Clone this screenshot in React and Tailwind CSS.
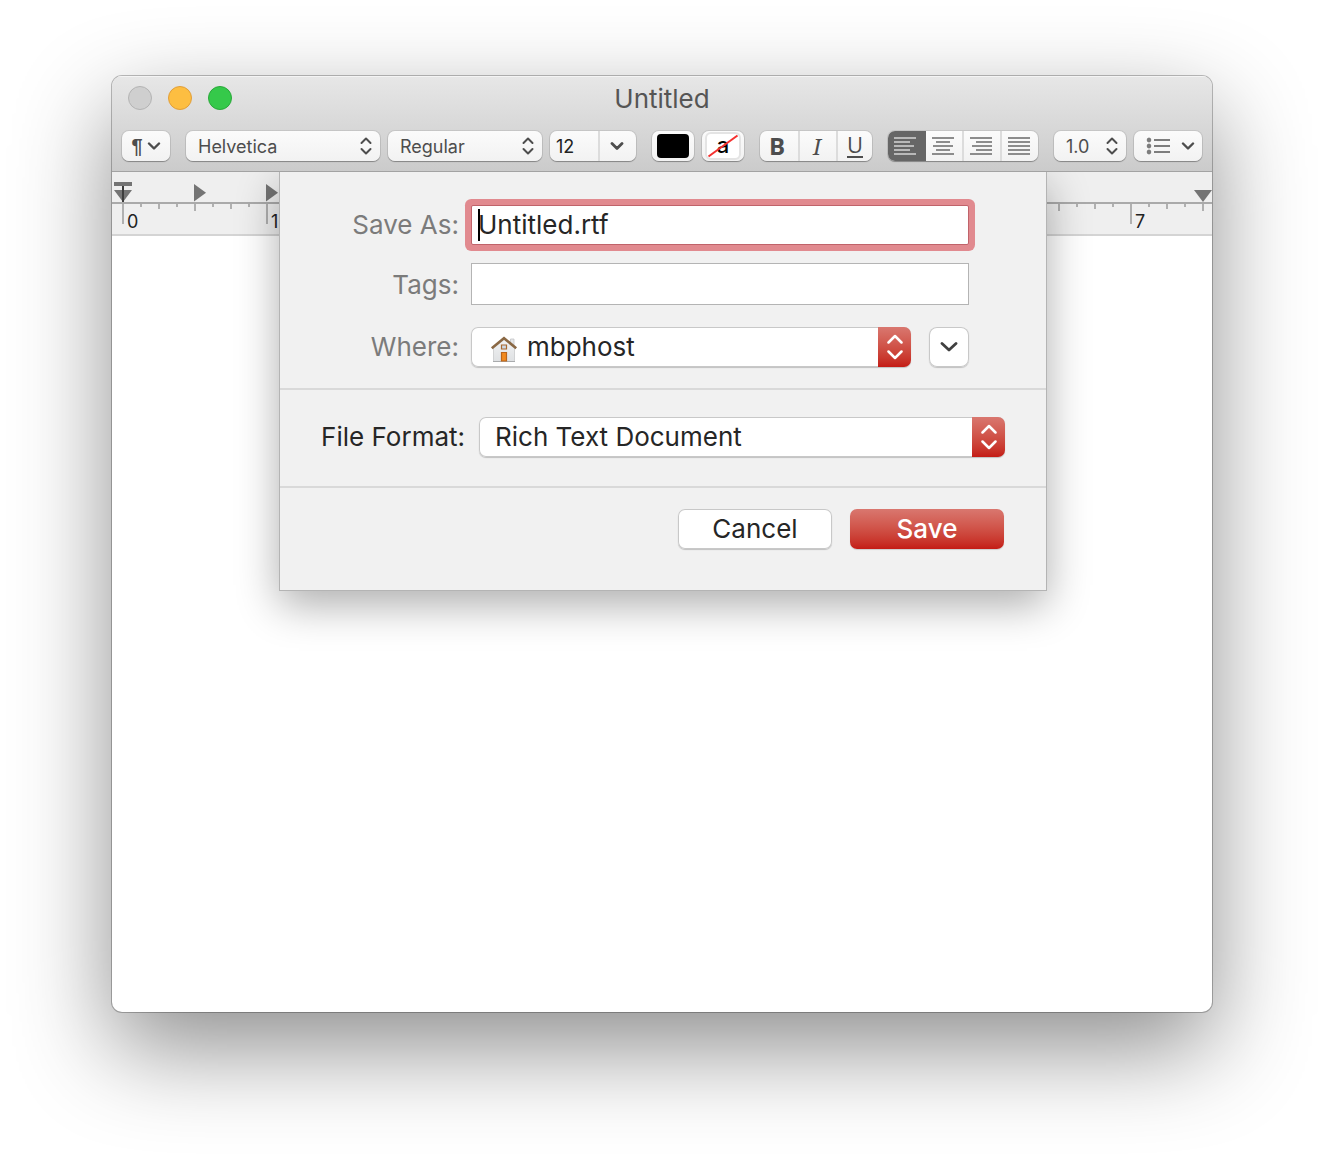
import React from "react";

const control =
  "h-[30px] rounded-[7px] bg-gradient-to-b from-[#fbfbfb] to-[#f2f2f2] shadow-[0_0_0_1px_rgba(0,0,0,0.08),0_1px_1px_rgba(0,0,0,0.3)]";

function ChevronDown({ className = "", stroke = 2.4 }) {
  return (
    <svg viewBox="0 0 14 8" fill="none" stroke="currentColor" strokeWidth={stroke} strokeLinecap="round" strokeLinejoin="round" className={"h-2 w-3.5 shrink-0 " + className}>
      <path d="M2 1.5 7 6.5 12 1.5" />
    </svg>
  );
}

function UpDown({ className = "" }) {
  return (
    <svg viewBox="0 0 12 18" fill="none" stroke="currentColor" strokeWidth="2" strokeLinecap="round" strokeLinejoin="round" className={"h-[18px] w-3 shrink-0 " + className}>
      <path d="M1.5 6 6 1.5 10.5 6M1.5 12 6 16.5 10.5 12" />
    </svg>
  );
}

function ToolbarSelect({ label, value, className }) {
  return (
    <div className={"relative " + className}>
      <select aria-label={label} defaultValue={value} className={control + " w-full appearance-none pt-0.5 pr-6 pl-3 text-lg leading-7 text-[#4d4d4d] outline-none"}>
        <option>{value}</option>
      </select>
      <UpDown className="pointer-events-none absolute top-1.5 right-2 text-[#4d4d4d]" />
    </div>
  );
}

const LINES = {
  left: [[0, 22], [0, 16], [0, 20], [0, 16], [0, 22]],
  center: [[0, 22], [4, 14], [1, 20], [4, 14], [0, 22]],
  right: [[0, 22], [6, 16], [2, 20], [6, 16], [0, 22]],
  justify: [[0, 22], [0, 22], [0, 22], [0, 22], [0, 22]],
};

function AlignIcon({ kind }) {
  return (
    <svg viewBox="0 0 22 18" fill="currentColor" className="h-[18px] w-[22px]">
      {LINES[kind].map(([x, w], i) => (
        <rect key={i} x={x} y={i * 4} width={w} height="2" />
      ))}
    </svg>
  );
}

function ListIcon() {
  return (
    <svg viewBox="0 0 24 18" fill="#7d7d7d" className="h-[18px] w-6">
      <path d="M2.4 0h1.2v18H2.4z" opacity=".35" />
      {[3, 9, 15].map((y) => (
        <g key={y}>
          <circle cx="3" cy={y} r="2.3" />
          <rect x="8" y={y - 1} width="16" height="2" />
        </g>
      ))}
    </svg>
  );
}

function RulerInch({ n, label }) {
  return (
    <div className="w-36 shrink-0">
      <svg viewBox="0 0 144 32" className="block h-8 w-36 overflow-visible">
        <g fill="#b0b0b0">
          <rect x="0" y="0" width="2" height="20" />
          {[18, 54, 90, 126].map((x) => <rect key={x} x={x} y="0" width="2" height="3" />)}
          {[36, 108].map((x) => <rect key={x} x={x} y="0" width="2" height="5" />)}
          <rect x="72" y="0" width="2" height="7" />
        </g>
        {n < 6 && <path d="M72 -20v17.500l12-8.700z" fill="#747474" />}
        {n > 0 && n < 7 && <path d="M0 -20v17.500l12-8.700z" fill="#747474" />}
        <text x="5" y="24" fontSize="18" fill="#222" fontFamily="Inter, sans-serif">{label}</text>
      </svg>
    </div>
  );
}

const INCHES = ["0", "1", "", "", "", "", "", "7"];

function Ruler() {
  return (
    <div className="relative h-16 overflow-hidden border-b-2 border-[#d4d4d4] bg-[#efefef]">
      <div className="mt-[30px] flex border-t-2 border-[#aaaaaa] pl-2.5">
        {INCHES.map((label, n) => <RulerInch key={n} n={n} label={label} />)}
      </div>
      <svg viewBox="0 0 18 20" className="absolute top-2.5 left-0.5 h-5 w-[18px]">
        <path d="M0 0h18v4H0zM0 8h18L9 20z" fill="#747474" />
        <path d="M8 4h2v16H8z" fill="#3c3c3c" />
      </svg>
      <svg viewBox="0 0 18 12" className="absolute top-[18px] right-0 h-3 w-[18px]">
        <path d="M0 0h18L9 12z" fill="#747474" />
      </svg>
    </div>
  );
}

function HomeIcon({ className }) {
  return (
    <svg viewBox="0 0 28 28" className={"h-7 w-7 " + className}>
      <defs>
        <linearGradient id="wall" x1="0" y1="0" x2="0" y2="1">
          <stop offset="0" stopColor="#f2f3f4" />
          <stop offset="1" stopColor="#dfe1e3" />
        </linearGradient>
      </defs>
      <path d="M20.500 4h3.500v7h-3.500z" fill="#e6e7e8" stroke="#c3c4c6" strokeWidth=".8" />
      <path d="M3.500 12 14 3.500 24.500 12v14.500h-21z" fill="url(#wall)" stroke="#c9cacb" strokeWidth=".8" />
      <path d="M3 26.500h22" stroke="#a9abad" strokeWidth="1" />
      <path d="M1.800 13.300 14 3.200l12.200 10.100" fill="none" stroke="#8a6844" strokeWidth="2.600" />
      <path d="M11.500 10h5v4h-5z" fill="#cdd9e6" stroke="#a9692f" strokeWidth="1.200" />
      <path d="M11.500 17.500h5v8.500h-5z" fill="#f28a1e" stroke="#b9651b" strokeWidth="1.200" />
    </svg>
  );
}

function PopUp({ id, value, className, padding, children }) {
  return (
    <div className={"relative h-10 " + className}>
      <select id={id} defaultValue={value} className={"h-10 w-full appearance-none rounded-[7px] bg-white pr-10 text-[26px] leading-10 text-[#262626] shadow-[inset_0_0_0_1px_#c8c8c8,0_1px_1px_rgba(0,0,0,0.2)] outline-none " + padding}>
        <option>{value}</option>
      </select>
      {children}
      <span className="pointer-events-none absolute inset-y-0 right-0 flex w-[33px] items-center justify-center rounded-r-[7px] bg-gradient-to-b from-[#d9776f] to-[#c41b15] text-white">
        <svg viewBox="0 0 16 26" fill="none" stroke="currentColor" strokeWidth="2.500" strokeLinecap="round" strokeLinejoin="round" className="h-[26px] w-4">
          <path d="M1.500 8.500 8 2l6.500 6.500M1.500 17.500 8 24l6.500-6.500" />
        </svg>
      </span>
    </div>
  );
}

function SaveSheet() {
  const label = "w-[179px] shrink-0 text-right text-[#7b7b7b]";
  return (
    <form className="w-[768px] border border-t-0 border-[#b4b4b4] bg-[#f1f1f1] text-[26px] leading-10 text-[#262626] shadow-[0_14px_40px_rgba(0,0,0,0.32)]" onSubmit={(e) => e.preventDefault()}>
      <div className="flex flex-col border-b-2 border-[#d9d9d9] pt-[33px] pb-[21px]">
        <div className="flex gap-3">
          <label htmlFor="name" className={label}>Save As:</label>
          <div className="relative">
            <input id="name" defaultValue="Untitled.rtf" className="h-10 w-[498px] rounded-xs border border-[#c0636a] bg-white px-1.5 text-[#262626] shadow-[0_0_0_6px_#e18a8f] outline-none" />
            <span className="absolute top-1 left-[7px] h-8 w-0.5 bg-black" />
          </div>
        </div>
        <div className="mt-[18px] flex items-end gap-3">
          <label htmlFor="tags" className={label}>Tags:</label>
          <input id="tags" className="h-[42px] w-[498px] border border-[#b4b4b4] bg-white px-1.5 outline-none" />
        </div>
        <div className="mt-[22px] flex gap-3">
          <label htmlFor="where" className={label}>Where:</label>
          <PopUp id="where" value="mbphost" className="w-[440px]" padding="pl-14">
            <HomeIcon className="pointer-events-none absolute top-2 left-[19px]" />
          </PopUp>
          <button type="button" aria-label="Show more" className="ml-1.5 flex h-10 w-10 items-center justify-center rounded-lg bg-white text-[#404040] shadow-[inset_0_0_0_1px_#c8c8c8,0_1px_1px_rgba(0,0,0,0.2)]">
            <svg viewBox="0 0 18 10" fill="none" stroke="currentColor" strokeWidth="2.800" strokeLinecap="round" strokeLinejoin="round" className="h-2.5 w-[18px]">
              <path d="M2 1.500 9 8l7-6.500" />
            </svg>
          </button>
        </div>
      </div>
      <div className="flex gap-3.5 border-b-2 border-[#d9d9d9] pt-[27px] pb-[29px]">
        <label htmlFor="format" className="w-[185px] shrink-0 text-right">File Format:</label>
        <PopUp id="format" value="Rich Text Document" className="w-[526px]" padding="pl-4" />
      </div>
      <div className="flex justify-end gap-[18px] pt-[21px] pr-[42px] pb-[41px]">
        <button type="button" className="h-10 w-[154px] rounded-[7px] bg-white shadow-[inset_0_0_0_1px_#c8c8c8,0_1px_1px_rgba(0,0,0,0.2)]">Cancel</button>
        <button type="submit" className="h-10 w-[154px] rounded-[7px] bg-gradient-to-b from-[#d9776f] to-[#c41b15] font-medium text-white shadow-[0_1px_1px_rgba(0,0,0,0.15)]">Save</button>
      </div>
    </form>
  );
}

export default function App() {
  return (
    <main className="bg-white px-28 pt-[76px] pb-[148px] font-['Inter',sans-serif]">
      <section className="overflow-hidden rounded-[10px] bg-white shadow-[0_0_0_1px_rgba(0,0,0,0.25),0_36px_96px_rgba(0,0,0,0.45)]">
        <header className="border-b border-[#a3a3a3] bg-gradient-to-b from-[#e7e7e7] to-[#cbcbcb] shadow-[inset_0_1px_0_#f4f4f4]">
          <div className="grid h-[55px] grid-cols-[1fr_auto_1fr] items-start px-4 pt-2.5">
            <div className="flex gap-4">
              <button aria-label="Close" className="h-6 w-6 rounded-full border border-[#b3b3b3] bg-[#cfcfcf]" />
              <button aria-label="Minimize" className="h-6 w-6 rounded-full border border-[#e09e3a] bg-[#fdbe41]" />
              <button aria-label="Zoom" className="h-6 w-6 rounded-full border border-[#2aa83a] bg-[#35c94a]" />
            </div>
            <h1 className="text-[26px] leading-[26px] text-[#555555]">Untitled</h1>
          </div>
          <div className="flex gap-4 px-2.5 pb-2.5">
            <button aria-label="Paragraph styles" className={control + " flex w-12 items-center justify-center gap-1 text-[#4d4d4d]"}>
              <span className="font-['Liberation_Sans',sans-serif] text-xl leading-8 font-bold">¶</span>
              <ChevronDown />
            </button>
            <div className="flex min-w-0 flex-1 gap-2">
              <ToolbarSelect label="Font family" value="Helvetica" className="min-w-0 flex-1" />
              <ToolbarSelect label="Typeface" value="Regular" className="w-[154px]" />
              <div className={control + " flex w-[86px]"}>
                <input aria-label="Font size" defaultValue="12" className="w-12 pt-0.5 pl-1.5 text-lg leading-7 text-[#222222] outline-none" />
                <button aria-label="Font sizes" className="flex flex-1 items-center justify-center border-l-2 border-[#dcdcdc] pr-0.5 text-[#4d4d4d]">
                  <ChevronDown stroke={2.8} />
                </button>
              </div>
            </div>
            <div className="flex gap-2">
              <button aria-label="Text color" className={control + " w-[42px] px-[5px]"}>
                <span className="block h-6 rounded-sm bg-black" />
              </button>
              <button aria-label="Text background color" className={control + " relative w-[42px] px-[5px]"}>
                <svg viewBox="0 0 32 24" className="absolute top-[3px] left-[5px] h-6 w-8" stroke="#f5302f" strokeWidth="2">
                  <path d="M1.500 22.500 30.500 1.500" />
                </svg>
                <span className="block h-6 rounded-sm bg-white text-[22px] leading-[22px] font-medium text-black shadow-[0_0_0_2px_#e4e4e4]">a</span>
              </button>
            </div>
            <div className={control + " flex w-28 divide-x-2 divide-[#dcdcdc] text-[#4d4d4d]"}>
              <button className="flex-1 pr-1 font-['Open_Sans',sans-serif] text-2xl leading-[30px] font-bold">B</button>
              <button className="flex-1 pr-0.5 font-['Noto_Serif','DejaVu_Serif','Liberation_Serif',serif] text-[22px] leading-[30px] italic">I</button>
              <button aria-label="Underline" className="flex flex-1 justify-center">
                <span className="mt-0.5 h-[25px] border-b-2 border-[#4d4d4d] font-['Open_Sans',sans-serif] text-[22px] leading-[22px]">U</span>
              </button>
            </div>
            <div className={control + " flex w-[150px] overflow-hidden text-[#8c8c8c]"}>
              <button aria-label="Align left" className="flex w-[38px] items-center justify-center bg-[#666666] pr-1 text-[#b9b9b9]"><AlignIcon kind="left" /></button>
              <button aria-label="Align center" className="flex flex-1 items-center justify-center pr-0.5"><AlignIcon kind="center" /></button>
              <button aria-label="Align right" className="flex flex-1 items-center justify-center border-l-2 border-[#dcdcdc] pr-0.5"><AlignIcon kind="right" /></button>
              <button aria-label="Justify" className="flex flex-1 items-center justify-center border-l-2 border-[#dcdcdc] pr-0.5"><AlignIcon kind="justify" /></button>
            </div>
            <div className="flex gap-2">
              <ToolbarSelect label="Line spacing" value="1.0" className="w-[72px]" />
              <button aria-label="Lists" className={control + " flex w-[68px] items-center justify-between pr-[7px] pl-3 text-[#4d4d4d]"}>
                <ListIcon />
                <ChevronDown />
              </button>
            </div>
          </div>
        </header>
        <div className="relative overflow-hidden">
          <Ruler />
          <div className="min-h-[776px]" role="textbox" aria-label="Document" />
          <div className="absolute inset-x-0 top-0 flex justify-center pl-0.5">
            <SaveSheet />
          </div>
        </div>
      </section>
    </main>
  );
}
